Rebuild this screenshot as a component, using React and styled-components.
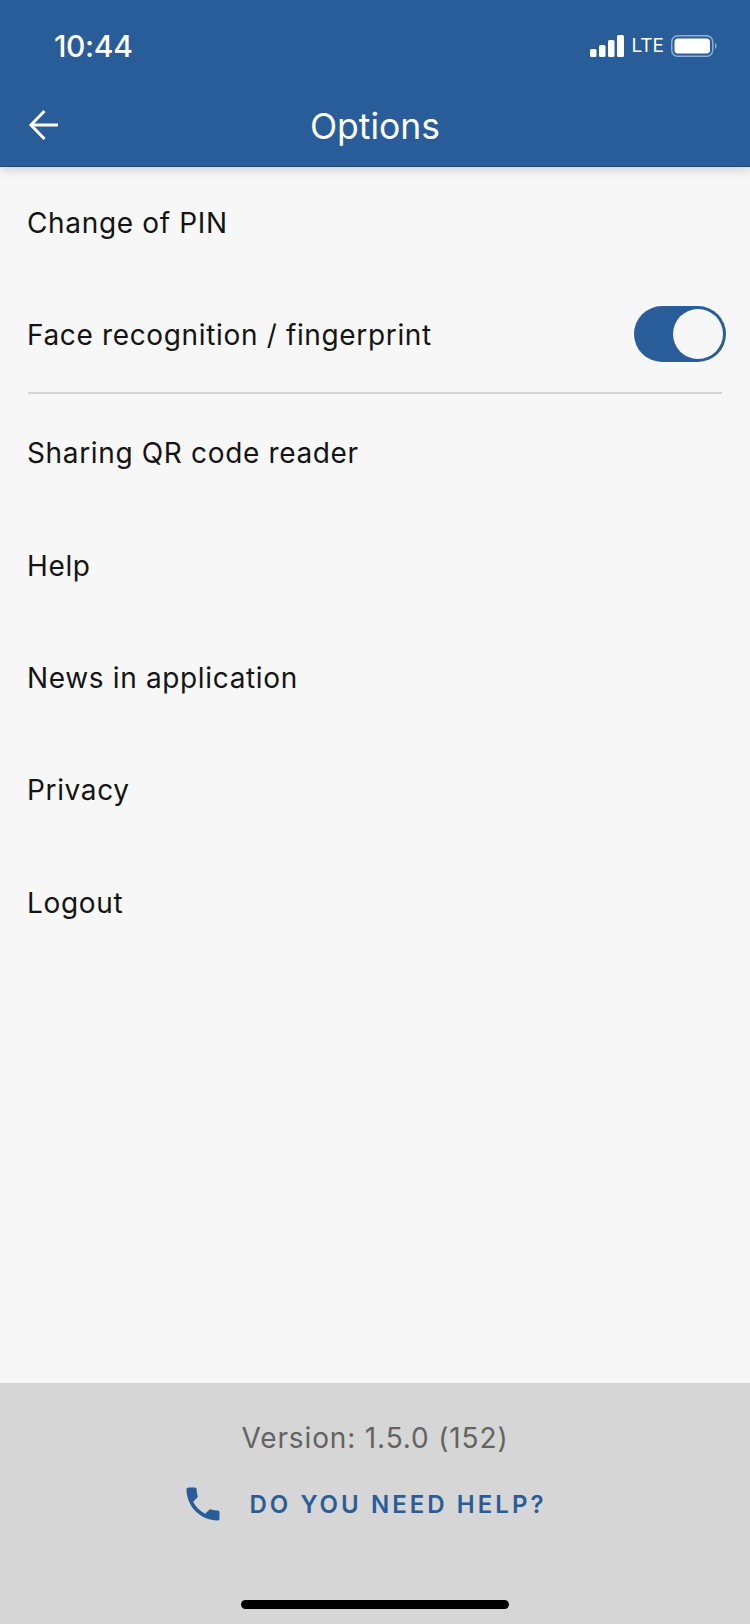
import React from 'react';
import styled, { createGlobalStyle } from 'styled-components';

const GlobalStyle = createGlobalStyle`
  html, body {
    margin: 0;
    padding: 0;
    background: #f7f7f7;
    font-family: "Inter", "Liberation Sans", sans-serif;
  }
  * { box-sizing: border-box; }
`;

const Screen = styled.div`
  width: 750px;
  height: 1624px;
  display: flex;
  flex-direction: column;
  overflow: hidden;
  background: #f7f7f7;
`;

const Header = styled.header`
  height: 167px;
  flex: none;
  background: #295d9a;
  border-bottom: 1px solid #1d4a80;
  box-shadow: 0 3px 10px rgba(0, 0, 0, 0.16);
  color: #fff;
  display: flex;
  flex-direction: column;
  position: relative;
  z-index: 1;
`;

const StatusBar = styled.div`
  height: 84px;
  padding: 29px 32px 0 54px;
  display: flex;
  justify-content: space-between;
  align-items: flex-start;
`;

const Time = styled.span`
  font-size: 30px;
  line-height: 34px;
  font-weight: 500;
  letter-spacing: -0.35px;
`;

const StatusIcons = styled.div`
  display: flex;
  align-items: center;
  height: 32px;
  margin-top: 1px;
  gap: 7px;
`;

const Lte = styled.span`
  font-size: 19px;
  line-height: 24px;
  font-weight: 400;
`;

const NavBar = styled.div`
  flex: 1;
  display: flex;
  align-items: center;
  justify-content: center;
  padding-top: 3px;
  position: relative;
`;

const BackButton = styled.div`
  position: absolute;
  left: 27px;
  top: 23px;
  display: flex;
`;

const Title = styled.h1`
  margin: 0;
  font-size: 35.5px;
  line-height: 42px;
  font-weight: 400;
`;

const Main = styled.main`
  flex: 1;
  display: flex;
  flex-direction: column;
`;

const Row = styled.div`
  height: 112px;
  flex: none;
  padding: 0 24px 0 27px;
  display: flex;
  align-items: center;
  justify-content: space-between;
  font-size: 28px;
  letter-spacing: 0.65px;
  color: #141414;
`;

const ListRow = styled(Row)`
  height: 112.4px;
`;

const Divider = styled.div`
  height: 2px;
  margin: 1px 28px 3px 28px;
  background: #d6d6d6;
`;

const Toggle = styled.div`
  width: 92px;
  height: 56px;
  margin-top: -2px;
  padding: 3px;
  border-radius: 28px;
  background: #295d9a;
  display: flex;
  justify-content: flex-end;
`;

const Knob = styled.div`
  width: 50px;
  height: 50px;
  border-radius: 50%;
  background: #f7f7f7;
`;

const Footer = styled.footer`
  height: 241px;
  flex: none;
  background: #d6d6d6;
  display: flex;
  flex-direction: column;
  align-items: center;
  padding-top: 38px;
`;

const Version = styled.div`
  font-size: 28px;
  line-height: 34px;
  letter-spacing: 0.86px;
  color: #636363;
`;

const HelpLink = styled.div`
  margin-top: 27px;
  margin-right: 22px;
  display: flex;
  align-items: center;
  gap: 24px;
  height: 44px;
  color: #295d9a;
  font-size: 24px;
  font-weight: 600;
  letter-spacing: 3.05px;
`;

const HomeBar = styled.div`
  margin-top: auto;
  margin-bottom: 15px;
  width: 268px;
  height: 9px;
  border-radius: 5px;
  background: #000;
`;

const items = ['Sharing QR code reader', 'Help', 'News in application', 'Privacy', 'Logout'];

const App = () => (
  <Screen>
    <GlobalStyle />
    <Header>
      <StatusBar>
        <Time>10:44</Time>
        <StatusIcons>
          <svg width="34" height="22" viewBox="0 0 34 22" fill="#fff">
            <rect x="0" y="14" width="6.5" height="8" rx="1.5" />
            <rect x="9" y="10" width="6.5" height="12" rx="1.5" />
            <rect x="18" y="5" width="6.5" height="17" rx="1.5" />
            <rect x="27" y="0" width="7" height="22" rx="1.5" />
          </svg>
          <Lte>LTE</Lte>
          <svg width="47" height="22" viewBox="0 0 47 22">
            <rect x="0.75" y="0.75" width="41" height="20.5" rx="6" fill="none" stroke="#8fadd0" strokeWidth="1.5" />
            <rect x="3.5" y="3.5" width="35.5" height="15" rx="3.5" fill="#fff" />
            <path d="M44 8 C46 9 46 13 44 14 Z" fill="#8fadd0" />
          </svg>
        </StatusIcons>
      </StatusBar>
      <NavBar>
        <BackButton>
          <svg width="36" height="36" viewBox="0 0 36 36" fill="none" stroke="#fff" strokeWidth="3">
            <path d="M31 18H4" />
            <path d="M17.5 4 4 18 17.5 32" />
          </svg>
        </BackButton>
        <Title>Options</Title>
      </NavBar>
    </Header>
    <Main>
      <Row>Change of PIN</Row>
      <Row>
        Face recognition / fingerprint
        <Toggle><Knob /></Toggle>
      </Row>
      <Divider />
      {items.map((label) => (
        <ListRow key={label}>{label}</ListRow>
      ))}
    </Main>
    <Footer>
      <Version>Version: 1.5.0 (152)</Version>
      <HelpLink>
        <svg width="44" height="44" viewBox="0 0 24 24" fill="#295d9a">
          <path d="M6.62 10.79c1.44 2.83 3.76 5.14 6.59 6.59l2.2-2.2c.27-.27.67-.36 1.02-.24 1.12.37 2.33.57 3.57.57.55 0 1 .45 1 1V20c0 .55-.45 1-1 1-9.39 0-17-7.61-17-17 0-.55.45-1 1-1h3.5c.55 0 1 .45 1 1 0 1.25.2 2.45.57 3.57.11.35.03.74-.25 1.02l-2.2 2.2z" />
        </svg>
        DO YOU NEED HELP?
      </HelpLink>
      <HomeBar />
    </Footer>
  </Screen>
);

export default App;
